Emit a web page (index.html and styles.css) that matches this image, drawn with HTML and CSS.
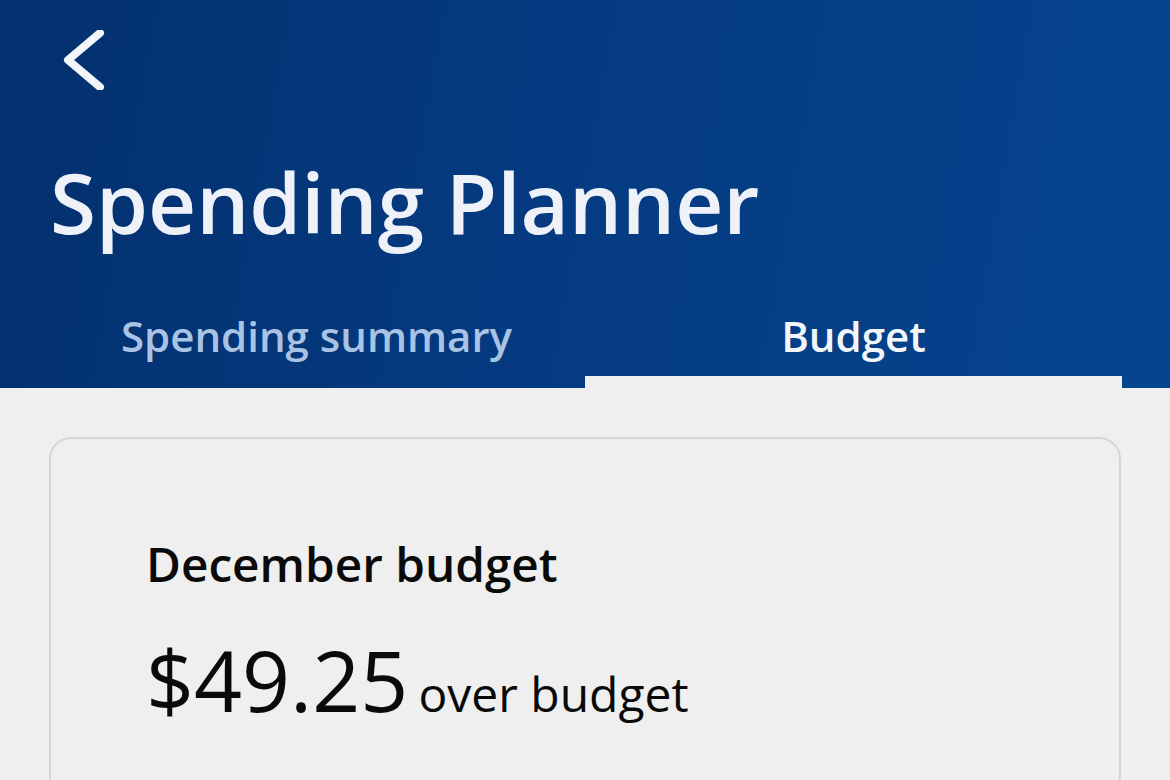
FILE: index.html
```html
<!DOCTYPE html>
<html lang="en">
<head>
<meta charset="utf-8">
<title>Spending Planner</title>
<link rel="stylesheet" href="styles.css">
</head>
<body>
<header class="app-header">
  <div class="topbar">
    <button class="back-btn" aria-label="Back">
      <svg width="60" height="60" viewBox="0 0 60 60" aria-hidden="true">
        <path d="M46 3 L14 30 L46 57" fill="none" stroke="#f2f5fa" stroke-width="8" stroke-linecap="round" stroke-linejoin="round"/>
      </svg>
    </button>
  </div>
  <h1 class="title">Spending Planner</h1>
  <nav class="tabs">
    <a class="tab">Spending summary</a>
    <a class="tab tab-active">Budget</a>
  </nav>
</header>
<main class="content">
  <section class="card">
    <h2 class="card-title">December budget</h2>
    <p class="amount-line"><span class="amount">$49.25</span> <span class="amount-label">over budget</span></p>
  </section>
</main>
</body>
</html>
```

FILE: styles.css
```css
* { box-sizing: border-box; }

html, body {
  margin: 0;
  padding: 0;
}

body {
  background: #efefef;
  font-family: "Open Sans", "Noto Sans", sans-serif;
  width: 1170px;
  height: 780px;
  overflow: hidden;
}

.app-header {
  background: linear-gradient(100deg, #03306e 0%, #053a80 45%, #05458f 100%);
  padding: 0 48px;
  height: 388px;
}

.topbar {
  height: 147px;
  padding-top: 30px;
}

.back-btn {
  display: block;
  background: none;
  border: 0;
  padding: 0;
  margin-left: 6px;
  width: 60px;
  height: 60px;
  cursor: pointer;
}

.back-btn svg { display: block; }

.title {
  margin: 0 0 0 2px;
  font-size: 83.6px;
  line-height: 110px;
  font-weight: 600;
  color: #eef2f8;
  letter-spacing: 0;
}

.tabs {
  margin-top: 50px;
  display: grid;
  grid-template-columns: 1fr 1fr;
}

.tab {
  display: block;
  text-align: center;
  font-size: 42px;
  line-height: 57px;
  font-weight: 600;
  color: #a9c3e4;
  padding-bottom: 24px;
  position: relative;
}

.tab-active {
  color: #f2f6fb;
}

.tab-active::after {
  content: "";
  position: absolute;
  left: 0;
  right: 0;
  bottom: 0;
  height: 12px;
  background: #eff0f2;
}

.content {
  padding: 49px 49px 0 49px;
}

.card {
  border: 2px solid #d6d6d6;
  border-radius: 22px;
  background: #efefef;
  padding: 93px 95px 0 95px;
  height: 360px;
}

.card-title {
  margin: 0;
  font-size: 47.7px;
  line-height: 64px;
  font-weight: 600;
  color: #0a0a0a;
}

.amount-line {
  margin: 27px 0 0 0;
  color: #0a0a0a;
  line-height: 114px;
  white-space: nowrap;
}

.amount {
  font-size: 84px;
  font-weight: 400;
}

.amount-label {
  font-size: 48px;
  font-weight: 400;
  margin-left: 6px;
}
```
